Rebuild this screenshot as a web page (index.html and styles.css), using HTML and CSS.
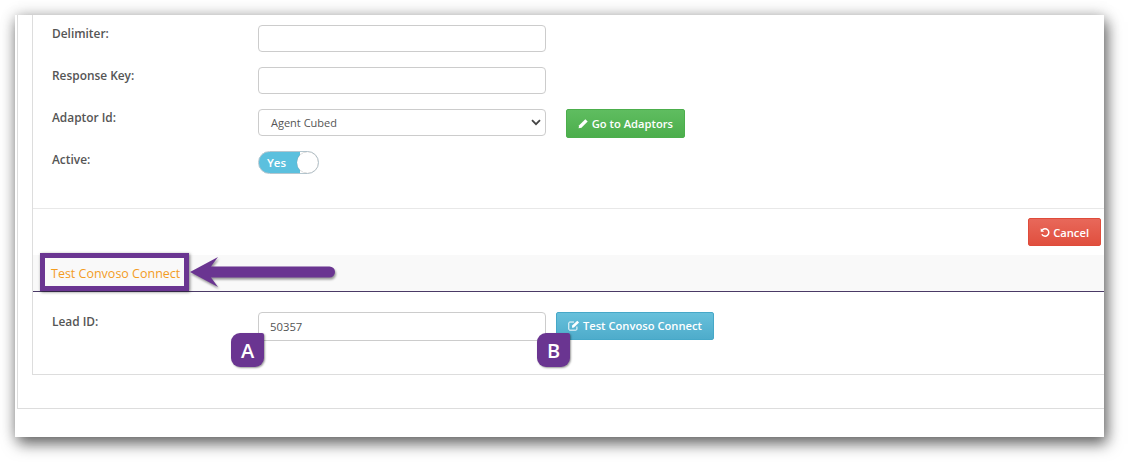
FILE: index.html
```html
<!DOCTYPE html>
<html lang="en">
<head>
<meta charset="utf-8">
<title>Test Convoso Connect</title>
<link rel="stylesheet" href="styles.css">
</head>
<body>
<div class="window">
  <div class="outer">
    <div class="inner">
      <div class="form">
        <div class="row row-first">
          <label class="label">Delimiter:</label>
          <input class="field" type="text">
        </div>
        <div class="row">
          <label class="label">Response Key:</label>
          <input class="field" type="text">
        </div>
        <div class="row">
          <label class="label">Adaptor Id:</label>
          <div class="field select">
            <span>Agent Cubed</span>
            <svg class="chev" width="10" height="7" viewBox="0 0 10 7"><path d="M1 1.2 5 5.2 9 1.2" fill="none" stroke="#444" stroke-width="1.8"/></svg>
          </div>
          <button class="btn btn-green">
            <svg class="ico" width="11" height="11" viewBox="0 0 11 11"><path d="M0.6 10.4 1.2 7.4 7.6 1 10 3.4 3.6 9.8Z" fill="#fff"/></svg>
            Go to Adaptors
          </button>
        </div>
        <div class="row row-toggle">
          <label class="label">Active:</label>
          <div class="toggle"><span class="toggle-text">Yes</span><span class="knob"></span></div>
        </div>
      </div>
      <div class="actions">
        <button class="btn btn-red">
          <svg class="ico" width="11" height="11" viewBox="0 0 11 11"><path d="M2.2 3.2A4 4 0 1 1 2 7.4" fill="none" stroke="#fff" stroke-width="1.6"/><path d="M0.8 1V4.6H4.4Z" fill="#fff"/></svg>
          Cancel
        </button>
      </div>
      <div class="section-head">Test Convoso Connect</div>
      <div class="row row-lead">
        <label class="label label-lead">Lead ID:</label>
        <input class="field field-lead" type="text" value="50357">
        <button class="btn btn-blue">
          <svg class="ico" width="12" height="11" viewBox="0 0 12 11"><path d="M9 6.500V9.200A1 1 0 0 1 8 10.200H1.800A1 1 0 0 1 .8 9.200V3A1 1 0 0 1 1.800 2H6" fill="none" stroke="#fff" stroke-width="1"/><path d="M4.200 5.600 9.400 .6 11.200 2.400 6 7.500 4 7.800Z" fill="#fff"/></svg>
          Test Convoso Connect
        </button>
      </div>
    </div>
  </div>

  <div class="callout"></div>
  <svg class="arrow" width="150" height="40" viewBox="0 0 150 40">
    <path d="M1 20 29 5 22 14.500H140.500a5.500 5.500 0 0 1 0 11H22L29 35Z" fill="#6a3591"/>
  </svg>
  <div class="badge badge-a">A</div>
  <div class="badge badge-b">B</div>
</div>
</body>
</html>
```

FILE: styles.css
```css
* { box-sizing: border-box; }
html, body { margin: 0; padding: 0; }
body {
  width: 1129px;
  height: 462px;
  background: #fff;
  overflow: hidden;
  font-family: "Open Sans", sans-serif;
  font-size: 11px;
  color: #555;
}
.window {
  position: relative;
  width: 1089px;
  height: 422px;
  margin: 15px 0 0 15px;
  padding-left: 2px;
  background: #fff;
  box-shadow: 3px 7px 14px rgba(0, 0, 0, .55), 0 0 14px rgba(0, 0, 0, .22);
  overflow: visible;
}
.outer {
  height: 394px;
  padding-left: 14px;
  border-left: 1px solid #ddd;
  border-bottom: 1px solid #ddd;
}
.inner {
  height: 360px;
  border-left: 1px solid #ddd;
  border-bottom: 1px solid #ddd;
}
.form { height: 194px; border-bottom: 1px solid #e8e8e8; }
.row {
  display: flex;
  align-items: flex-start;
  margin-bottom: 15px;
}
.row-first { padding-top: 10px; }
.label {
  width: 225px;
  padding-left: 19px;
  font-weight: 600;
  font-size: 11.9px;
  line-height: 16px;
  color: #555;
}
.label-lead { padding-top: 1px; }
.field {
  width: 288px;
  height: 27px;
  padding: 0 12px;
  border: 1px solid #ccc;
  border-radius: 4px;
  background: #fff;
  font: 400 11px "Open Sans", sans-serif;
  color: #555;
}
.select {
  display: flex;
  align-items: center;
  justify-content: space-between;
  padding-right: 4px;
}
.btn {
  display: inline-flex;
  align-items: center;
  gap: 3px;
  height: 28px;
  padding: 0 11px;
  border: 1px solid;
  border-radius: 2px;
  color: #fff;
  font: 600 11.2px "Open Sans", sans-serif;
  white-space: nowrap;
}
.btn-green {
  margin-left: 20px;
  width: 119px;
  height: 29px;
  background: linear-gradient(#5fbd60, #4cae4c);
  border-color: #4cae4c;
}
.btn-red {
  width: 73px;
  background: linear-gradient(#e8685a, #e04f3e);
  border-color: #df4b3a;
}
.btn-blue {
  margin-left: 10px;
  width: 158px;
  padding-bottom: 1px;
  background: linear-gradient(#67c0db, #4eaccb);
  border-color: #46a8c8;
}
.row-toggle { margin-top: -2px; }
.toggle {
  display: flex;
  align-items: center;
  justify-content: space-between;
  width: 61px;
  height: 23px;
  padding: 0 0 0 8px;
  border: 1px solid #b4c6cf;
  border-radius: 12px;
  background: linear-gradient(90deg, #5bc0de 70%, #fff 70%);
}
.toggle-text { color: #fff; font-weight: 600; font-size: 11.5px; }
.knob {
  width: 21px;
  height: 21px;
  border-radius: 50%;
  background: #fff;
  box-shadow: 0 0 1px #888;
}
.actions {
  display: flex;
  justify-content: flex-end;
  height: 46px;
  padding: 9px 3px 0 0;
}
.section-head {
  height: 37px;
  padding: 10px 0 0 18px;
  background: #f9f9f9;
  border-bottom: 1px solid #4a3a66;
  font-size: 12.5px;
  line-height: 17px;
  color: #f39c1f;
}
.row-lead { margin: 20px 0 0; }
.field-lead { height: 29px; padding-left: 11px; font-size: 11.3px; }
.callout {
  position: absolute;
  left: 25px;
  top: 238px;
  width: 149px;
  height: 38px;
  border: 5px solid #6a3591;
  box-shadow: 1px 1px 3px rgba(0, 0, 0, .5);
}
.arrow {
  position: absolute;
  left: 174px;
  top: 237px;
  filter: drop-shadow(1px 2px 1px rgba(0, 0, 0, .4));
}
.badge {
  position: absolute;
  top: 318px;
  width: 33px;
  height: 34px;
  display: flex;
  align-items: center;
  justify-content: center;
  background: #6a3591;
  border-radius: 9px 2px 9px 9px;
  box-shadow: 1px 1px 2px rgba(0, 0, 0, .4);
  color: #fff;
  font: 600 20px "Open Sans", sans-serif;
}
.badge-a { left: 216px; }
.badge-b { left: 522px; }
```
